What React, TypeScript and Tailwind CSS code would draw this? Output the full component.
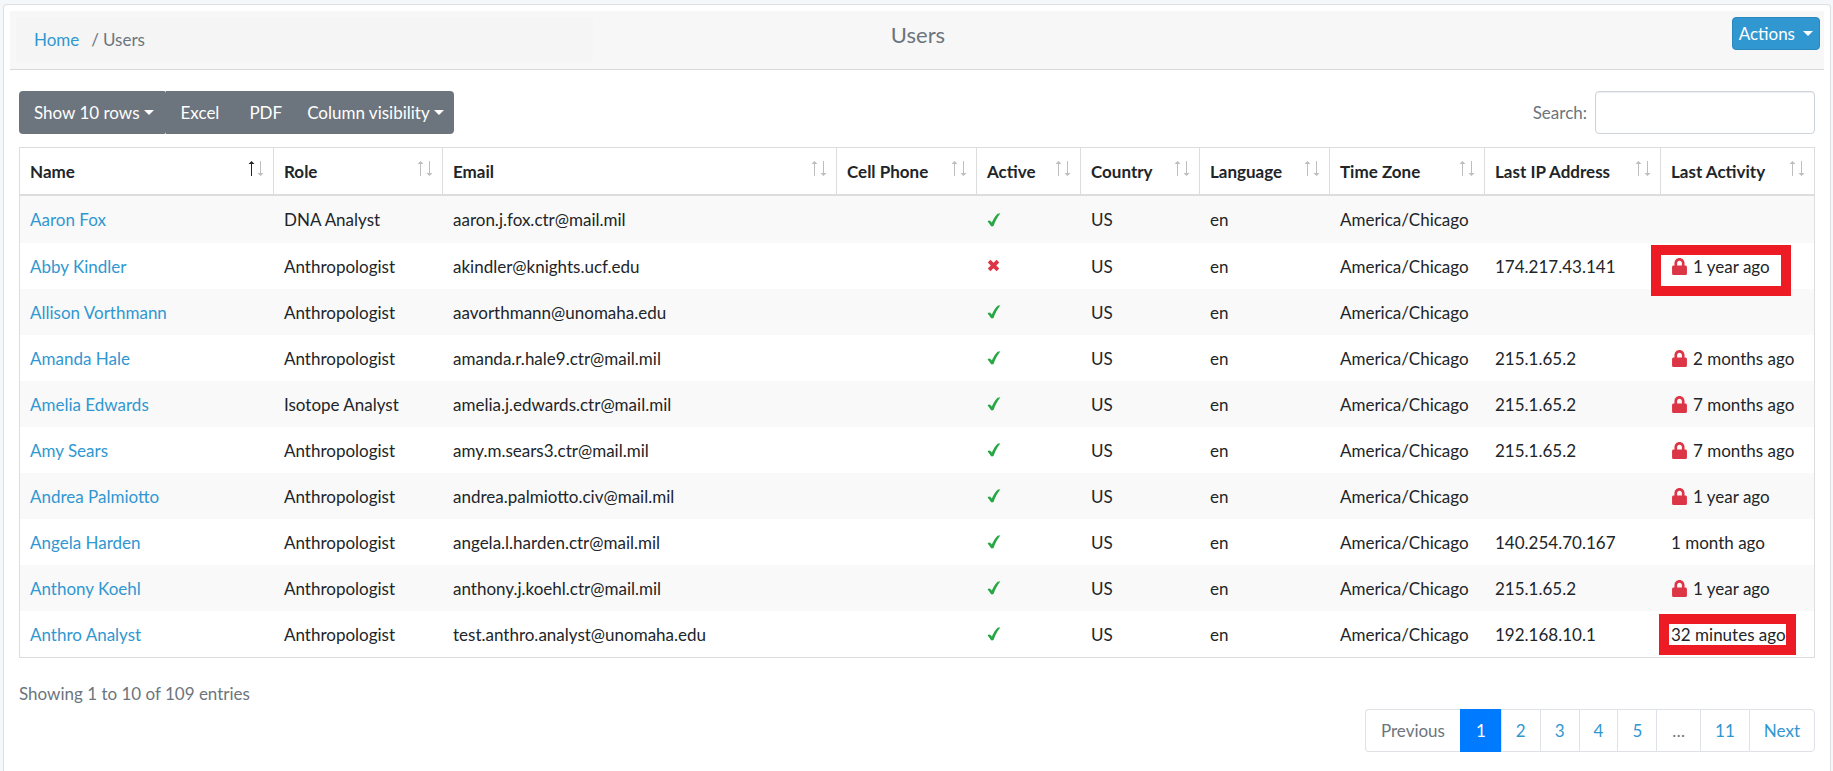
import { FaLock } from 'react-icons/fa';

const columns = [
  { label: 'Name', width: 'w-[254px]', sorted: true },
  { label: 'Role', width: 'w-[169px]' },
  { label: 'Email', width: '' },
  { label: 'Cell Phone', width: 'w-[140px]' },
  { label: 'Active', width: 'w-[104px]' },
  { label: 'Country', width: 'w-[119px]' },
  { label: 'Language', width: 'w-[130px]' },
  { label: 'Time Zone', width: 'w-[155px]' },
  { label: 'Last IP Address', width: 'w-[176px]' },
  { label: 'Last Activity', width: 'w-[153px]' },
];

type User = {
  name: string;
  role: string;
  email: string;
  active: boolean;
  ip: string;
  activity: string;
  locked?: boolean;
  mark?: string;
};

const users: User[] = [
  { name: 'Aaron Fox', role: 'DNA Analyst', email: 'aaron.j.fox.ctr@mail.mil', active: true, ip: '', activity: '' },
  { name: 'Abby Kindler', role: 'Anthropologist', email: 'akindler@knights.ucf.edu', active: false, ip: '174.217.43.141', activity: '1 year ago', locked: true, mark: '-left-5 -top-2 h-[51px] w-[140px]' },
  { name: 'Allison Vorthmann', role: 'Anthropologist', email: 'aavorthmann@unomaha.edu', active: true, ip: '', activity: '' },
  { name: 'Amanda Hale', role: 'Anthropologist', email: 'amanda.r.hale9.ctr@mail.mil', active: true, ip: '215.1.65.2', activity: '2 months ago', locked: true },
  { name: 'Amelia Edwards', role: 'Isotope Analyst', email: 'amelia.j.edwards.ctr@mail.mil', active: true, ip: '215.1.65.2', activity: '7 months ago', locked: true },
  { name: 'Amy Sears', role: 'Anthropologist', email: 'amy.m.sears3.ctr@mail.mil', active: true, ip: '215.1.65.2', activity: '7 months ago', locked: true },
  { name: 'Andrea Palmiotto', role: 'Anthropologist', email: 'andrea.palmiotto.civ@mail.mil', active: true, ip: '', activity: '1 year ago', locked: true },
  { name: 'Angela Harden', role: 'Anthropologist', email: 'angela.l.harden.ctr@mail.mil', active: true, ip: '140.254.70.167', activity: '1 month ago' },
  { name: 'Anthony Koehl', role: 'Anthropologist', email: 'anthony.j.koehl.ctr@mail.mil', active: true, ip: '215.1.65.2', activity: '1 year ago', locked: true },
  { name: 'Anthro Analyst', role: 'Anthropologist', email: 'test.anthro.analyst@unomaha.edu', active: true, ip: '192.168.10.1', activity: '32 minutes ago', mark: '-left-3 -top-[7px] h-[41px] w-[137px]' },
];

const pages = ['Previous', '1', '2', '3', '4', '5', '…', '11', 'Next'];

function Caret() {
  return <span className="inline-block border-x-5 border-t-5 border-x-transparent border-t-white" />;
}

function SortArrows({ sorted }: { sorted?: boolean }) {
  return (
    <svg viewBox="0 0 16 16" className="mb-1 h-4 w-4 shrink-0" aria-hidden="true">
      <path d="M3 3H0.5L3.5 0L6.5 3H4V15H3Z" className={sorted ? 'fill-[#212529]' : 'fill-[#bcbebf]'} />
      <path d="M12 0H13V12H15.5L12.5 15L9.5 12H12Z" className="fill-[#bcbebf]" />
    </svg>
  );
}

function Check() {
  return (
    <svg viewBox="0 0 14 14" className="h-3.5 w-3.5 fill-[#28a745]" role="img" aria-label="Active">
      <path d="M0.6 8.4C1.3 7.2 2.8 7.1 3.5 8L4.8 9.6C6.4 5.9 8.4 2.8 10.6 0.7L13.4 0.3C10.3 4.2 8.3 8 6.5 13C5.7 13.6 4.5 13.7 3.9 13.1C3 11.3 1.9 9.7 0.6 8.4Z" />
    </svg>
  );
}

function Cross() {
  return (
    <svg viewBox="0 0 14 14" className="h-3.5 w-3.5 stroke-[#dc3545]" fill="none" role="img" aria-label="Inactive">
      <path d="M2.1 2.1L10.9 10.9M10.9 2.1L2.1 10.9" strokeWidth="3.8" />
    </svg>
  );
}

function PageItem({ label }: { label: string }) {
  const base = 'h-[43px] border border-r-0 first:rounded-l last:rounded-r last:border-r';
  if (label === '1') {
    return <button className={`${base} border-[#007bff] bg-[#007bff] px-[15px] text-white`} aria-current="page">{label}</button>;
  }
  if (label === 'Previous' || label === '…') {
    return <button disabled className={`${base} border-[#dee2e6] px-[15px] text-[#6c757d]`}>{label}</button>;
  }
  return <button className={`${base} border-[#dee2e6] px-[14px] text-[#3097d1]`}>{label}</button>;
}

export default function App() {
  return (
    <div className="min-h-screen bg-[#f5f8fa] pl-[3px] pr-[2px] pt-1 font-[Lato,sans-serif] text-[17px] leading-[27px] text-[#212529]">
      <div className="min-h-[767px] rounded-t border border-b-0 border-[#dddfe0] bg-white p-1.5">
        <header className="grid h-[59px] grid-cols-3 items-start border-b border-[#d8d9da] bg-[#f7f7f7] py-1.5 pl-1.5 pr-1">
          <nav aria-label="Breadcrumb" className="mr-6 flex h-[45px] items-center rounded bg-[#f5f5f5] px-[18px]">
            <a href="#" className="text-[#3097d1]">Home</a>
            <span className="ml-3 text-[#6c757d]">/</span>
            <span className="ml-1 text-[#6c757d]">Users</span>
          </nav>
          <h1 className="pt-1 text-center text-[22px] text-[#6c757d]">Users</h1>
          <button className="flex h-[33px] items-center gap-2 justify-self-end rounded border border-[#2a88bd] bg-[#3097d1] px-1.5 text-white">
            Actions <Caret />
          </button>
        </header>

        <main className="px-[9px] pt-[21px]">
          <div className="mb-[13px] flex items-center justify-between">
            <div className="flex h-[43px] text-white *:bg-[#6c757d]">
              <button className="flex items-center gap-1 rounded-l rounded-r-[2px] pl-[15px] pr-3">Show 10 rows <Caret /></button>
              <button className="px-[15px]">Excel</button>
              <button className="px-[15px]">PDF</button>
              <button className="flex items-center gap-1 rounded-r px-[10px]">Column visibility <Caret /></button>
            </div>
            <label className="flex items-center gap-2 text-[#6c757d]">
              Search:
              <input type="search" className="h-[43px] w-[220px] rounded border border-[#ced4da] bg-white px-3 shadow-[inset_0_1px_1px_rgba(0,0,0,0.075)] outline-none" />
            </label>
          </div>

          <table className="w-full table-fixed border-separate border-spacing-0 border border-[#dddddd]">
            <thead>
              <tr>
                {columns.map((col) => (
                  <th key={col.label} className={`h-12 whitespace-nowrap border-b-2 border-r border-[#dddddd] py-0 pl-[10px] pr-[9px] text-left font-bold last:border-r-0 ${col.width}`}>
                    <div className="flex items-center justify-between">
                      {col.label}
                      <SortArrows sorted={col.sorted} />
                    </div>
                  </th>
                ))}
              </tr>
            </thead>
            <tbody>
              {users.map((user) => (
                <tr key={user.email} className="h-[46px] whitespace-nowrap odd:bg-[#f9f9f9] first:h-[47px] *:px-[10px] *:py-0">
                  <td><a href="#" className="text-[#3097d1]">{user.name}</a></td>
                  <td>{user.role}</td>
                  <td>{user.email}</td>
                  <td />
                  <td>{user.active ? <Check /> : <Cross />}</td>
                  <td>US</td>
                  <td>en</td>
                  <td>America/Chicago</td>
                  <td>{user.ip}</td>
                  <td>
                    <div className="relative flex items-center gap-[5px]">
                      {user.mark && <span className={`absolute border-10 border-[#ed1c24] ${user.mark}`} />}
                      {user.locked && <FaLock size={17} className="text-[#dc3545]" aria-label="Locked" />}
                      {user.activity}
                    </div>
                  </td>
                </tr>
              ))}
            </tbody>
          </table>

          <p className="mt-[22px] text-[#6c757d]">Showing 1 to 10 of 109 entries</p>
          <nav aria-label="Pagination" className="mt-[2px] flex justify-end">
            {pages.map((page) => (
              <PageItem key={page} label={page} />
            ))}
          </nav>
        </main>
      </div>
    </div>
  );
}
